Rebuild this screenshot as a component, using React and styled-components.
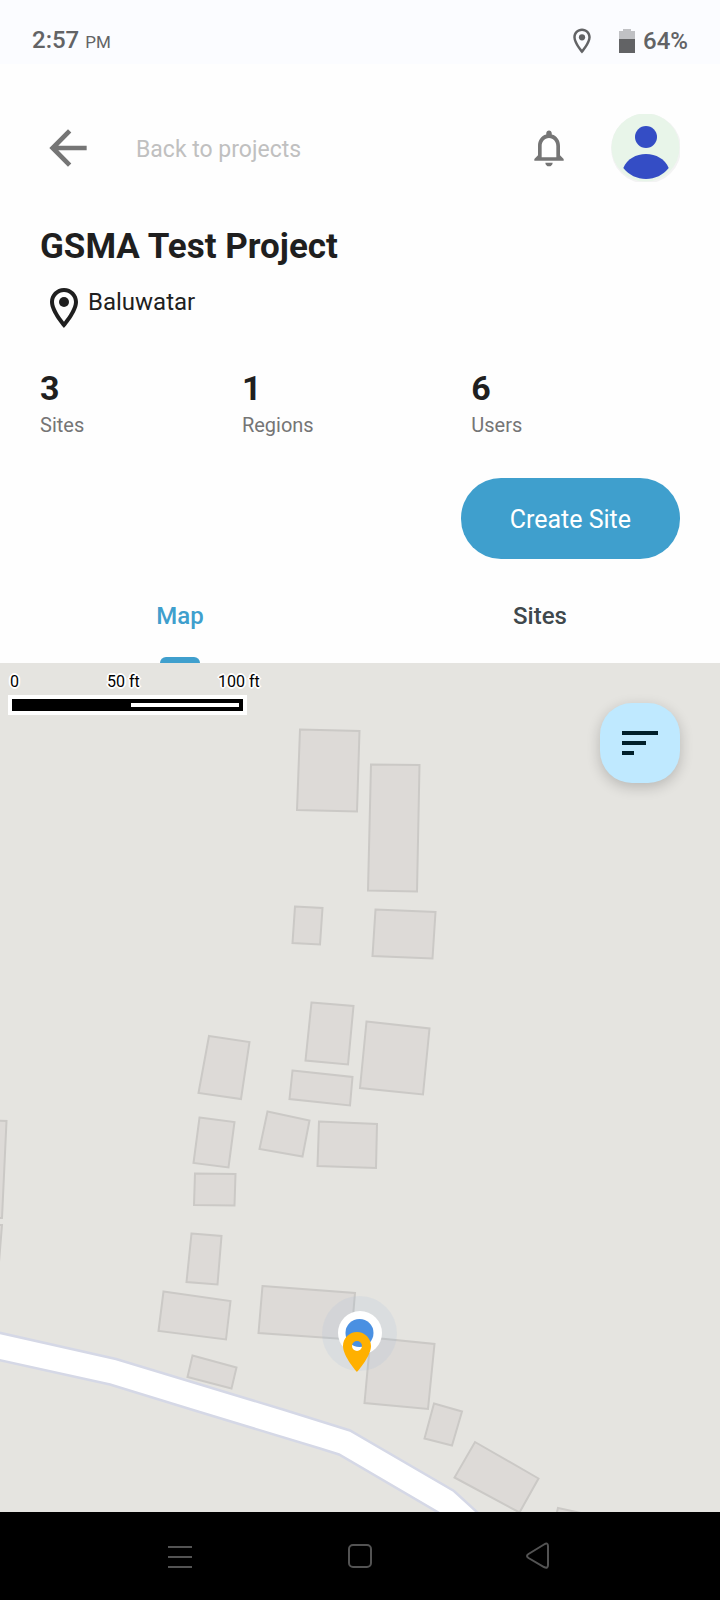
import React, { useState } from "react";
import styled, { createGlobalStyle, css } from "styled-components";
import { MdArrowBack, MdNotificationsNone, MdSort } from "react-icons/md";

const GlobalStyle = createGlobalStyle`
  *, *::before, *::after { box-sizing: border-box; }
  body {
    margin: 0;
    font-family: Roboto, "Liberation Sans", sans-serif;
    background: #fefefe;
    color: #1f1f1f;
  }
  button { font: inherit; border: 0; padding: 0; background: none; cursor: pointer; }
  svg { display: block; flex: none; }
`;

const Screen = styled.div`
  display: flex;
  flex-direction: column;
  min-height: 100vh;
`;

/* Status bar */

const StatusBar = styled.div`
  display: flex;
  align-items: center;
  justify-content: space-between;
  height: 64px;
  padding: 18px 32px 0;
  background: #fbfcff;
  color: #626365;
  font-size: 24px;
  line-height: 32px;
  font-weight: 500;
`;

const Meridiem = styled.small`
  font-size: 17px;
  font-weight: 400;
`;

const StatusIcons = styled.div`
  display: flex;
  align-items: center;
  gap: 22px;
`;

const Battery = styled.span`
  display: flex;
  align-items: center;
  gap: 8px;
`;

/* Project header */

const Project = styled.main`
  display: flex;
  flex: 1;
  flex-direction: column;
`;

const Header = styled.header`
  display: flex;
  align-items: center;
  padding: 50px 40px 0;
`;

const BackLink = styled.a`
  display: flex;
  flex: 1;
  align-items: center;
  gap: 40px;
  color: #c0c0c0;
  font-size: 23px;
  line-height: 32px;
  text-decoration: none;

  svg { color: #757575; }
`;

const BackText = styled.span`
  padding-top: 4px;
`;

const IconButton = styled.button`
  display: flex;
  color: #757575;
`;

const AvatarButton = styled(IconButton)`
  margin-left: 40px;
`;

const Overview = styled.section`
  display: flex;
  flex-direction: column;
  padding: 44px 40px 0;
`;

const Title = styled.h1`
  margin: 0;
  font-size: 35px;
  line-height: 42px;
  font-weight: 700;
`;

const Place = styled.p`
  display: flex;
  align-items: flex-start;
  margin: 16px 0 36px;
  font-size: 24px;
  line-height: 36px;
`;

const Stats = styled.dl`
  display: flex;
  margin: 0 0 41px;
`;

const Stat = styled.div`
  display: flex;
  flex: 1 1 auto;
  flex-direction: column-reverse;
  gap: 5px;
`;

const StatValue = styled.dd`
  margin: 0;
  font-size: 34px;
  line-height: 40px;
  font-weight: 700;
`;

const StatLabel = styled.dt`
  color: #757575;
  font-size: 20px;
  line-height: 24px;
`;

const PrimaryButton = styled.button`
  align-self: flex-end;
  height: 81px;
  padding: 2px 49px 0;
  border-radius: 40px;
  background: #3f9fcd;
  color: #fff;
  font-size: 25px;
  line-height: 32px;
`;

/* Tabs */

const Tabs = styled.div`
  display: flex;
  padding-top: 8px;
`;

const Tab = styled.button`
  position: relative;
  flex: 1;
  height: 96px;
  padding-top: 2px;
  color: #40484c;
  font-size: 24px;
  line-height: 32px;
  font-weight: 500;

  ${(p) =>
    p.$active &&
    css`
      color: #3f9fcd;

      &::after {
        content: "";
        position: absolute;
        left: 50%;
        bottom: 0;
        width: 40px;
        height: 6px;
        margin-left: -20px;
        border-radius: 6px 6px 0 0;
        background: #3f9fcd;
      }
    `}
`;

/* Map */

const MapPanel = styled.section`
  position: relative;
  flex: 1;
  min-height: 480px;
  overflow: hidden;
  background: #e5e4e0;
`;

const MapDrawing = styled.svg`
  position: absolute;
  inset: 0;
  width: 100%;
  height: 100%;
`;

const ScaleBar = styled.div`
  position: absolute;
  top: 9px;
  left: 8px;
`;

const ScaleLabels = styled.div`
  display: grid;
  grid-template-columns: 97px 111px auto;
  padding-left: 2px;
  color: #000;
  font-size: 16px;
  line-height: 20px;
  white-space: nowrap;
  text-shadow: 2px 0 #fff, -2px 0 #fff, 0 2px #fff, 0 -2px #fff,
    1px 1px #fff, -1px 1px #fff, 1px -1px #fff, -1px -1px #fff;
`;

const ScaleTrack = styled.div`
  width: 239px;
  height: 20px;
  margin-top: 3px;
  padding: 4px;
  border: 4px solid #fff;
  background: #000;
`;

const ScaleHalf = styled.div`
  width: 108px;
  height: 4px;
  margin-left: auto;
  background: #fff;
`;

const FilterButton = styled.button`
  position: absolute;
  top: 40px;
  right: 40px;
  display: flex;
  align-items: center;
  justify-content: center;
  width: 80px;
  height: 80px;
  border-radius: 32px;
  background: #bfe9ff;
  color: #001f2a;
  box-shadow: 0 4px 14px rgba(0, 0, 0, 0.2);
`;

/* System navigation */

const SystemNav = styled.nav`
  display: flex;
  height: 88px;
  padding: 0 12.5%;
  background: #000;
`;

const NavButton = styled.button`
  display: flex;
  flex: 1;
  align-items: center;
  justify-content: center;
  color: #535353;
`;

const stats = [
  { label: "Sites", value: 3 },
  { label: "Regions", value: 1 },
  { label: "Users", value: 6 },
];

const buildings = [
  "300,729.5 359.5,731 357,811.5 297,810",
  "371,764.5 419.5,765 417,891.5 368,890.5",
  "295,906.5 322.5,908 320,944.5 292.5,943",
  "375.5,909.5 435.5,912 432.5,958.5 372.5,956",
  "209,1036 249.5,1042 241,1099 198.5,1093",
  "311.5,1002.5 353.5,1006 348,1064.5 305.5,1060.5",
  "366.5,1021.5 429.5,1028.5 423,1094.5 360,1088",
  "292.5,1070.5 352.5,1077 350,1105.5 289.5,1099",
  "267.5,1111.5 309.5,1120.5 302.5,1156.5 259.5,1149",
  "319,1121.5 377,1124 376,1168 317.5,1166",
  "199.5,1117.5 234.5,1122 228.5,1167.5 193.5,1163",
  "195,1173.5 235.5,1174 234.5,1205.5 194,1205",
  "191.5,1233.5 221.5,1236 217.5,1284.5 186.5,1282",
  "163.5,1291.5 230.5,1301 226,1339.5 158.5,1331",
  "192.5,1355.5 236.5,1367.5 231.5,1388.5 187.5,1377",
  "-8,1120.5 6.5,1121 2,1218 -8,1217.5",
  "-8,1224.5 2,1225 -1,1262 -8,1262",
  "262.5,1286 355,1293 351,1339.5 258.5,1333",
  "370.5,1337.5 434.5,1344 428,1409 364.5,1403",
  "434,1403.5 462,1411.5 452,1445.5 424.5,1438.5",
  "475,1442 538.5,1478.5 519.5,1512.5 454.5,1477.5",
  "558,1508 590,1515 588,1530 554,1524",
];

function PlaceIcon({ size }) {
  return (
    <svg width={size} height={size} viewBox="0 0 24 24" fill="currentColor" aria-hidden="true">
      <path
        fillRule="evenodd"
        d="M12 2C8.130 2 5 5.130 5 9c0 5.250 7 13 7 13s7-7.750 7-13c0-3.870-3.130-7-7-7zM7 9c0-2.760 2.240-5 5-5s5 2.240 5 5c0 2.880-2.880 7.190-5 9.880C9.920 16.210 7 11.850 7 9z"
      />
      <circle cx="12" cy="9" r="2.500" />
    </svg>
  );
}

function AvatarIcon() {
  return (
    <svg width="69" height="68" viewBox="0 0 69 68" aria-hidden="true">
      <circle cx="35" cy="34.500" r="35" fill="#f3f3f3" />
      <circle cx="34.500" cy="33.500" r="34" fill="#e8f5e9" />
      <circle cx="35" cy="23" r="11" fill="#344dc5" />
      <path
        d="M12.300 54C16 45 25 40 35 40s19 5 22.700 14C52 61 44 65 35 65S18 61 12.300 54z"
        fill="#344dc5"
      />
    </svg>
  );
}

function BatteryIcon() {
  return (
    <svg width="16" height="24" viewBox="0 0 16 24" aria-hidden="true">
      <path d="M0 2h4V0h8v2h4v9H0z" fill="#c0c1c4" />
      <path d="M0 10h16v14H0z" fill="#626365" />
    </svg>
  );
}

function SiteMap() {
  return (
    <MapDrawing
      viewBox="0 663 720 849"
      preserveAspectRatio="xMidYMid slice"
      role="img"
      aria-label="Map of the project site"
    >
      <g fill="#dddad7" stroke="#cbc9c6" strokeWidth="2">
        {buildings.map((points) => (
          <polygon key={points} points={points} />
        ))}
      </g>
      <path
        d="M-6 1331.500 116 1359 283 1409.500 350 1430.500 454 1491 490 1524H458L339 1454.500 320 1448.500 193 1410 110 1384.500-6 1359z"
        fill="#fff"
        stroke="#d5d8e6"
        strokeWidth="2.500"
      />
      <circle cx="359.500" cy="1333.500" r="37.500" fill="#8fb0dc" fillOpacity="0.13" />
      <circle cx="360" cy="1333" r="22" fill="#fff" />
      <circle cx="359.500" cy="1333" r="14" fill="#4a90e2" />
      <path
        transform="translate(333 1328) scale(2)"
        d="M12 2C8.130 2 5 5.130 5 9c0 5.250 7 13 7 13s7-7.750 7-13c0-3.870-3.130-7-7-7zm0 9.500a2.500 2.500 0 0 1 0-5 2.500 2.500 0 0 1 0 5z"
        fill="#ffb000"
      />
    </MapDrawing>
  );
}

export default function App() {
  const [tab, setTab] = useState("Map");

  return (
    <Screen>
      <GlobalStyle />
      <StatusBar>
        <span>
          2:57 <Meridiem>PM</Meridiem>
        </span>
        <StatusIcons>
          <PlaceIcon size={30} />
          <Battery>
            <BatteryIcon />
            64%
          </Battery>
        </StatusIcons>
      </StatusBar>

      <Project>
        <Header>
          <BackLink href="#projects">
            <MdArrowBack size={56} />
            <BackText>Back to projects</BackText>
          </BackLink>
          <IconButton aria-label="Notifications">
            <MdNotificationsNone size={44} />
          </IconButton>
          <AvatarButton aria-label="Profile">
            <AvatarIcon />
          </AvatarButton>
        </Header>

        <Overview>
          <Title>GSMA Test Project</Title>
          <Place>
            <PlaceIcon size={48} />
            Baluwatar
          </Place>
          <Stats>
            {stats.map((s) => (
              <Stat key={s.label}>
                <StatLabel>{s.label}</StatLabel>
                <StatValue>{s.value}</StatValue>
              </Stat>
            ))}
          </Stats>
          <PrimaryButton>Create Site</PrimaryButton>
        </Overview>

        <Tabs role="tablist">
          {["Map", "Sites"].map((name) => (
            <Tab
              key={name}
              role="tab"
              aria-selected={tab === name}
              $active={tab === name}
              onClick={() => setTab(name)}
            >
              {name}
            </Tab>
          ))}
        </Tabs>

        <MapPanel>
          <SiteMap />
          <ScaleBar>
            <ScaleLabels>
              <span>0</span>
              <span>50 ft</span>
              <span>100 ft</span>
            </ScaleLabels>
            <ScaleTrack>
              <ScaleHalf />
            </ScaleTrack>
          </ScaleBar>
          <FilterButton aria-label="Sort sites">
            <MdSort size={48} />
          </FilterButton>
        </MapPanel>
      </Project>

      <SystemNav aria-label="System">
        <NavButton aria-label="Recent apps">
          <svg width="24" height="24" viewBox="0 0 24 24" stroke="currentColor" strokeWidth="2">
            <path d="M0 3h24M0 13h24M0 23h24" />
          </svg>
        </NavButton>
        <NavButton aria-label="Home">
          <svg width="24" height="24" viewBox="0 0 24 24" fill="none" stroke="currentColor" strokeWidth="2">
            <rect x="1" y="1" width="22" height="22" rx="4" />
          </svg>
        </NavButton>
        <NavButton aria-label="Back">
          <svg width="28" height="28" viewBox="0 0 28 28" fill="none" stroke="currentColor" strokeWidth="2">
            <path d="M18 2.500Q22 0 22 4V23Q22 27 18 25L2.500 16Q-.5 14 2.500 12z" />
          </svg>
        </NavButton>
      </SystemNav>
    </Screen>
  );
}
